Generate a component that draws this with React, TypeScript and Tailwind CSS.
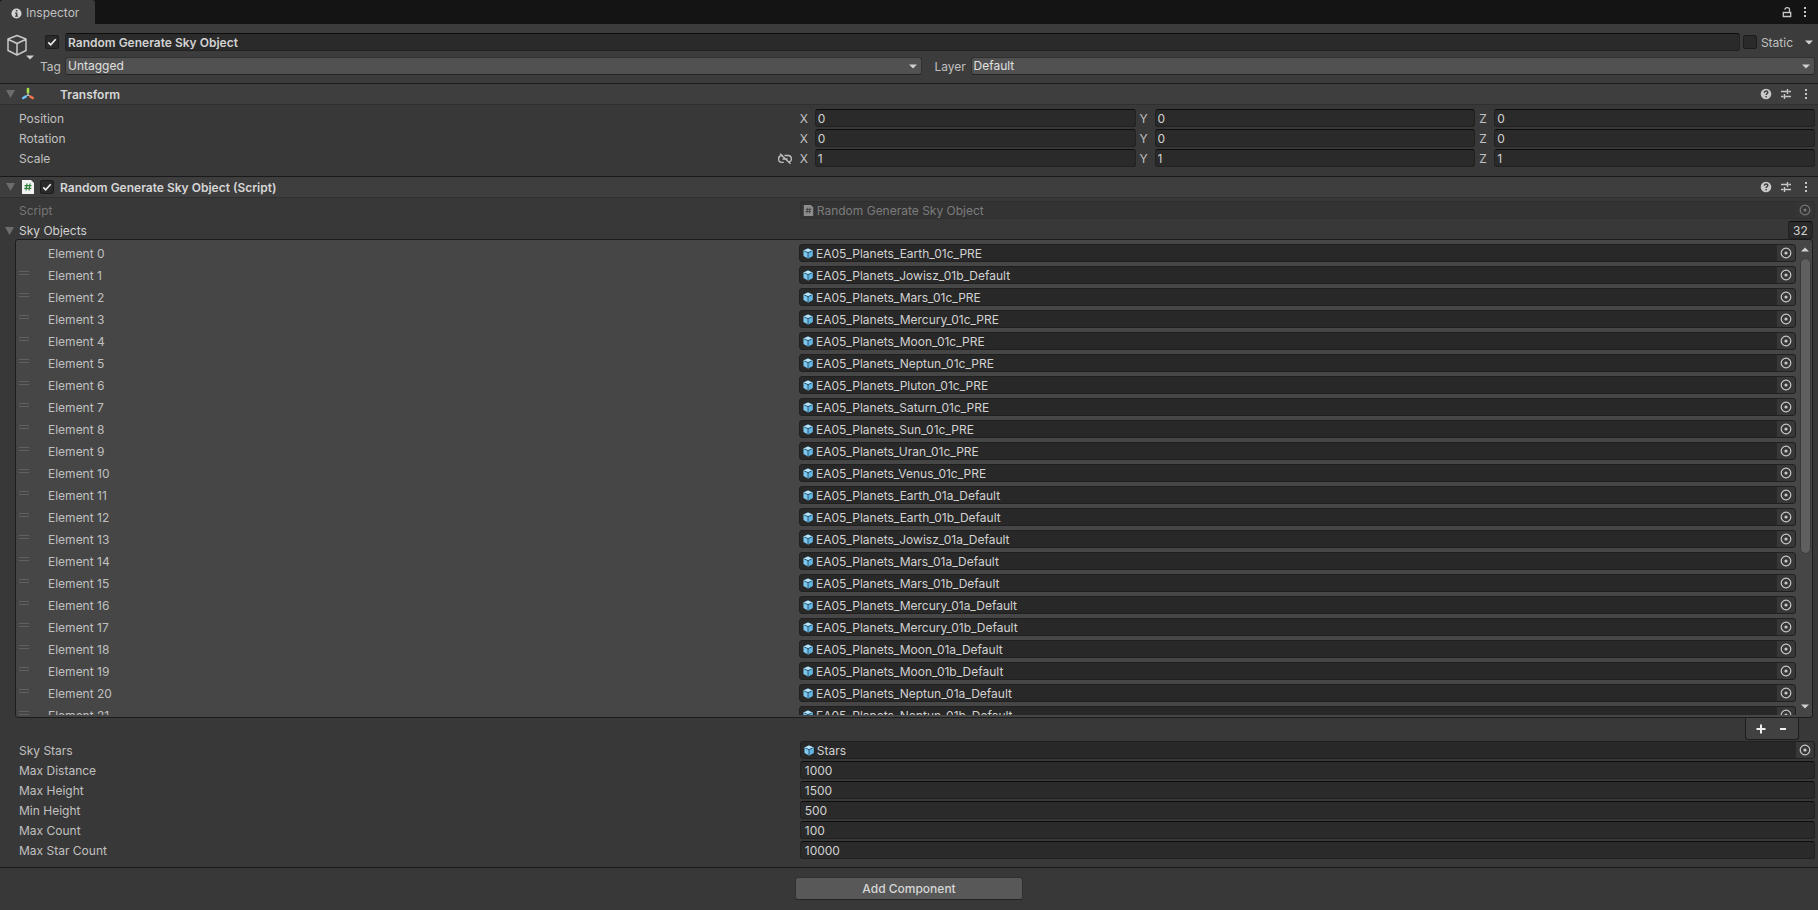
import { useState } from "react";
import type { ReactNode } from "react";

const FIELD =
  "h-[18px] min-w-0 rounded-[3px] border border-[#212121] border-t-[#0d0d0d] bg-[#2a2a2a] text-[#d2d2d2] outline-none";
const LABEL = "shrink-0 truncate pt-0.5 pl-[19px] w-[calc(45%-17px)]";

const skyObjects = [
  "EA05_Planets_Earth_01c_PRE",
  "EA05_Planets_Jowisz_01b_Default",
  "EA05_Planets_Mars_01c_PRE",
  "EA05_Planets_Mercury_01c_PRE",
  "EA05_Planets_Moon_01c_PRE",
  "EA05_Planets_Neptun_01c_PRE",
  "EA05_Planets_Pluton_01c_PRE",
  "EA05_Planets_Saturn_01c_PRE",
  "EA05_Planets_Sun_01c_PRE",
  "EA05_Planets_Uran_01c_PRE",
  "EA05_Planets_Venus_01c_PRE",
  "EA05_Planets_Earth_01a_Default",
  "EA05_Planets_Earth_01b_Default",
  "EA05_Planets_Jowisz_01a_Default",
  "EA05_Planets_Mars_01a_Default",
  "EA05_Planets_Mars_01b_Default",
  "EA05_Planets_Mercury_01a_Default",
  "EA05_Planets_Mercury_01b_Default",
  "EA05_Planets_Moon_01a_Default",
  "EA05_Planets_Moon_01b_Default",
  "EA05_Planets_Neptun_01a_Default",
  "EA05_Planets_Neptun_01b_Default",
];

const transformRows = [
  { label: "Position", value: "0" },
  { label: "Rotation", value: "0" },
  { label: "Scale", value: "1" },
];

const numberFields = [
  { label: "Max Distance", value: "1000" },
  { label: "Max Height", value: "1500" },
  { label: "Min Height", value: "500" },
  { label: "Max Count", value: "100" },
  { label: "Max Star Count", value: "10000" },
];

function CaretDown() {
  return (
    <svg width="8" height="5" viewBox="0 0 8 5" className="shrink-0" aria-hidden="true">
      <path d="M0 .5h8L4 4.500z" fill="#d0d0d0" />
    </svg>
  );
}

function Foldout() {
  return (
    <svg width="9" height="8" viewBox="0 0 9 8" aria-hidden="true">
      <path d="M0 0h9L4.500 8z" fill="#6c6c6c" />
    </svg>
  );
}

function KebabIcon() {
  return (
    <svg width="4" height="12" viewBox="0 0 4 12" fill="#c8c8c8" aria-hidden="true">
      <rect x="1" y="1" width="2" height="2" />
      <rect x="1" y="5" width="2" height="2" />
      <rect x="1" y="9" width="2" height="2" />
    </svg>
  );
}

function HelpIcon() {
  return (
    <svg width="12" height="12" viewBox="0 0 12 12" aria-hidden="true">
      <circle cx="6" cy="6" r="5.300" fill="#c8c8c8" />
      <path d="M4.300 4.800C4.300 2.400 7.900 2.500 7.800 4.600 7.800 5.700 6.100 5.700 6.100 7" fill="none" stroke="#3e3e3e" strokeWidth="1.400" />
      <rect x="5.400" y="8" width="1.400" height="1.400" fill="#3e3e3e" />
    </svg>
  );
}

function PresetIcon() {
  return (
    <svg width="12" height="12" viewBox="0 0 12 12" fill="none" stroke="#c8c8c8" strokeWidth="1.400" aria-hidden="true">
      <path d="M1 3.500h6M8.500 3.500H11M7.500 1v5M1 8.500h2.500M5 8.500h6M4.500 6v5" />
    </svg>
  );
}

function LockIcon() {
  return (
    <svg width="10" height="12" viewBox="0 0 10 12" fill="none" stroke="#c8c8c8" strokeWidth="1.300" aria-hidden="true">
      <path d="M1.300 6.500h7.400v4H1.300zM3 3.800V3.500C3 .9 7.500.9 7.500 3.500v3" />
    </svg>
  );
}

function InfoIcon() {
  return (
    <svg width="11" height="11" viewBox="0 0 11 11" aria-hidden="true">
      <circle cx="5.500" cy="5.500" r="5" fill="#d4d4d4" />
      <path d="M4.800 2h1.600v1.500H4.800zM4 4.600h2.400v3.200h.8v1H4v-1h.8V5.600H4z" fill="#3c3c3c" />
    </svg>
  );
}

function GameObjectIcon() {
  return (
    <svg width="22" height="22" viewBox="0 0 22 22" fill="none" stroke="#c8c8c8" strokeWidth="1.500" strokeLinejoin="round" aria-hidden="true">
      <path d="M11 1.500 20 5v11.500L11 21 2 16.500V5zM2 5.200l9 4.300 9-4.300M11 9.500V21" />
    </svg>
  );
}

function TransformIcon() {
  return (
    <svg width="14" height="14" viewBox="0 0 14 14" fill="none" strokeLinecap="round" aria-hidden="true">
      <path d="M7 6v2L5 9.300M7 8l2 1.300" stroke="#d8d8d8" strokeWidth="1" />
      <path d="M7 2v3.200" stroke="#a5e04b" strokeWidth="2.600" />
      <path d="M4.600 9.600 2.200 11" stroke="#6cc4f5" strokeWidth="2.600" />
      <path d="M9.400 9.600 11.800 11" stroke="#f0714a" strokeWidth="2.600" />
    </svg>
  );
}

function ScriptIcon({ muted = false }: { muted?: boolean }) {
  const size = muted ? 11 : 14;
  return (
    <svg width={size} height={size} viewBox="0 0 14 14" className="shrink-0" aria-hidden="true">
      <path d="M1 0h9l3 3v11H1z" fill={muted ? "#8c8c8c" : "#f2f2f2"} />
      <path d="M6 3.500 5 10.500M9 3.500 8 10.500M3.500 5.700h7M3.200 8.300h7" stroke={muted ? "#444444" : "#2f7d3b"} strokeWidth="1.200" />
    </svg>
  );
}

function PrefabIcon() {
  return (
    <svg width="10" height="11" viewBox="0 0 11 12" className="shrink-0" aria-hidden="true">
      <path d="M5.500.5 10.500 2.800v6L5.500 11.500.5 8.800v-6z" fill="#7fc9f0" />
      <path d="M5.500.5 10.500 2.800 5.500 5 .5 2.800z" fill="#b4e2f9" />
      <path d="M5.500 5 10.500 2.800v6L5.500 11.500z" fill="#62b6e4" />
      <path d="M1.500 3.300l4 1.800 4-1.800M5.500 5.100V11" fill="none" stroke="#1f4a63" strokeWidth="1" />
    </svg>
  );
}

function UnlinkIcon() {
  return (
    <svg width="14" height="12" viewBox="0 0 14 12" fill="none" stroke="#c0c0c0" strokeWidth="1.300" aria-hidden="true">
      <path d="M5 2.500H4a3.300 3.300 0 0 0 0 6.800h1.800M6.500 2.500H10a3.300 3.300 0 0 1 1.200 6.400M4.500 6h5M2 .8l10.500 10" />
    </svg>
  );
}

function Checkbox({ label, defaultChecked = false }: { label: string; defaultChecked?: boolean }) {
  return (
    <span className="grid size-[14px] shrink-0">
      <input
        type="checkbox"
        aria-label={label}
        defaultChecked={defaultChecked}
        className="peer col-start-1 row-start-1 size-[14px] appearance-none rounded-[2px] border border-[#1c1c1c] bg-[#2a2a2a]"
      />
      <svg
        viewBox="0 0 14 14"
        className="pointer-events-none invisible col-start-1 row-start-1 size-[14px] peer-checked:visible"
        fill="none"
        stroke="#eeeeee"
        strokeWidth="1.700"
        aria-hidden="true"
      >
        <path d="M3.300 7.300 5.700 9.800 10.700 4.200" />
      </svg>
    </span>
  );
}

function Dropdown({ id, value }: { id: string; value: string }) {
  return (
    <span className="grid h-[18px] min-w-0 flex-1 items-center">
      <select
        id={id}
        className="col-start-1 row-start-1 h-[18px] w-full appearance-none rounded-[3px] border border-[#303030] border-b-[#242424] bg-[#515151] pl-0.5 leading-4 text-[#e0e0e0] outline-none"
      >
        <option>{value}</option>
      </select>
      <span className="pointer-events-none col-start-1 row-start-1 mr-[5px] justify-self-end">
        <CaretDown />
      </span>
    </span>
  );
}

function ObjectField({ value, icon, muted = false }: { value: string; icon: ReactNode; muted?: boolean }) {
  return (
    <div
      className={`flex h-[18px] min-w-0 flex-1 items-center overflow-hidden rounded-[3px] border ${
        muted ? "border-[#2f2f2f] bg-[#333333] text-[#7c7c7c]" : "border-[#202020] bg-[#292828] text-[#d2d2d2]"
      }`}
    >
      <span className="flex w-[16px] shrink-0 justify-center">{icon}</span>
      <span className="min-w-0 flex-1 truncate pt-0.5">{value}</span>
      <button
        type="button"
        aria-label={`Select ${value}`}
        className={`flex h-full w-[18px] items-center justify-center ${muted ? "bg-[#353535] text-[#757575]" : "bg-[#373737] text-[#c8c8c8]"}`}
      >
        <svg width="12" height="12" viewBox="0 0 12 12" aria-hidden="true">
          <circle cx="6" cy="6" r="4.800" fill="none" stroke="currentColor" strokeWidth="1.200" />
          <circle cx="6" cy="6" r="1.600" fill="currentColor" />
        </svg>
      </button>
    </div>
  );
}

function ComponentHeader({ icon, title, toggle }: { icon: ReactNode; title: string; toggle?: boolean }) {
  return (
    <div className="flex h-[22px] items-center border-y border-t-[#1a1a1a] border-b-[#303030] bg-[#3e3e3e] pr-1.5 pl-1.5">
      <button type="button" aria-label={`Toggle ${title}`} className="w-[15px]">
        <Foldout />
      </button>
      <span className="w-[19px]">{icon}</span>
      <span className="flex w-5">{toggle && <Checkbox label={title} defaultChecked />}</span>
      <h2 className="flex-1 truncate pt-0.5 font-semibold text-[#d6d6d6]">{title}</h2>
      <div className="flex items-center gap-2">
        <button type="button" aria-label="Help">
          <HelpIcon />
        </button>
        <button type="button" aria-label="Presets">
          <PresetIcon />
        </button>
        <button type="button" aria-label="More options" className="flex w-3 justify-center">
          <KebabIcon />
        </button>
      </div>
    </div>
  );
}

function TransformSection() {
  return (
    <section>
      <ComponentHeader icon={<TransformIcon />} title="Transform" />
      <div className="flex flex-col gap-0.5 pt-1 pr-[3px] pb-[9px]">
        {transformRows.map(({ label, value }) => (
          <div key={label} className="flex items-center">
            <div className={`${LABEL} flex items-center justify-between`}>
              {label}
              {label === "Scale" && (
                <button type="button" aria-label="Constrain proportions" className="mr-2">
                  <UnlinkIcon />
                </button>
              )}
            </div>
            <div className="grid flex-1 grid-cols-3 gap-1">
              {["X", "Y", "Z"].map((axis) => (
                <label key={axis} className="flex min-w-0 items-center">
                  <span className="w-[15px] shrink-0 pt-0.5">{axis}</span>
                  <input aria-label={`${label} ${axis}`} defaultValue={value} className={`${FIELD} w-full px-0.5`} />
                </label>
              ))}
            </div>
          </div>
        ))}
      </div>
    </section>
  );
}

function SkyObjectList() {
  return (
    <>
      <div className="mr-[5px] ml-[15px] flex h-[479px] rounded-[3px] border border-[#1c1c1c] bg-[#464646] pb-0.5">
        {/* Rows run under the scrollbar column so labels line up with the fields outside the list. */}
        <ul className="-mr-[14px] min-w-0 flex-1 overflow-hidden pt-1">
          {skyObjects.map((name, i) => (
            <li key={name} className="mb-1 flex items-center pr-4">
              <div className="flex w-[calc(45%-18px)] shrink-0 items-center">
                <span className={`mx-[3px] mb-1 h-1 w-2.5 ${i === 0 ? "" : "border-y border-[#606060]"}`} />
                <span className="pt-0.5 pl-4">Element {i}</span>
              </div>
              <ObjectField value={name} icon={<PrefabIcon />} />
            </li>
          ))}
        </ul>
        <div className="flex w-[14px] flex-col items-center pt-[7px] pb-1.5" aria-hidden="true">
          <span className="rotate-180">
            <CaretDown />
          </span>
          <span className="mt-1.5 h-[296px] w-[11px] rounded-md border border-[#383838] bg-[#5f5f5f]" />
          <span className="mt-auto">
            <CaretDown />
          </span>
        </div>
      </div>
      <div className="mr-[19px] flex justify-end">
        <div className="flex h-[22px] w-[54px] items-center justify-around rounded-b-[3px] border border-t-0 border-[#1c1c1c] bg-[#414141] px-1">
          <button type="button" aria-label="Add element">
            <svg width="10" height="10" viewBox="0 0 10 10" aria-hidden="true">
              <path d="M5 .5v9M.5 5h9" stroke="#f0f0f0" strokeWidth="2" />
            </svg>
          </button>
          <button type="button" aria-label="Remove element">
            <svg width="10" height="10" viewBox="0 0 10 10" aria-hidden="true">
              <path d="M2 5h6" stroke="#f0f0f0" strokeWidth="2" />
            </svg>
          </button>
        </div>
      </div>
    </>
  );
}

function ScriptSection() {
  return (
    <section>
      <ComponentHeader icon={<ScriptIcon />} title="Random Generate Sky Object (Script)" toggle />
      <div className="flex items-center pt-[3px] pr-[3px]">
        <span className={`${LABEL} text-[#757575]`}>Script</span>
        <ObjectField value="Random Generate Sky Object" icon={<ScriptIcon muted />} muted />
      </div>
      <div className="mt-0.5 flex h-[18px] items-center justify-between px-[5px]">
        <button type="button" className="flex items-center gap-[5px] pt-0.5 text-[#d2d2d2]">
          <Foldout />
          Sky Objects
        </button>
        <input aria-label="Sky Objects size" defaultValue="32" className={`${FIELD} w-[25px] px-1`} />
      </div>
      <SkyObjectList />
      <div className="flex flex-col gap-0.5 pt-px pr-[3px] pb-2">
        <div className="flex items-center">
          <span className={LABEL}>Sky Stars</span>
          <ObjectField value="Stars" icon={<PrefabIcon />} />
        </div>
        {numberFields.map(({ label, value }) => (
          <label key={label} className="flex items-center">
            <span className={LABEL}>{label}</span>
            <input defaultValue={value} className={`${FIELD} flex-1 px-1`} />
          </label>
        ))}
      </div>
    </section>
  );
}

export default function App() {
  const [name, setName] = useState("Random Generate Sky Object");

  return (
    <div className="min-h-screen bg-[#383838] font-['Inter',sans-serif] text-[12px] leading-4 text-[#c0c0c0]">
      <div className="flex h-6 items-center justify-between bg-[#141414] pr-[11px]">
        <button type="button" className="flex h-6 w-[95px] items-center gap-1 rounded-t-[3px] bg-[#3c3c3c] pt-0.5 pl-[11px]">
          <InfoIcon />
          Inspector
        </button>
        <div className="flex items-center gap-[11px]">
          <button type="button" aria-label="Lock">
            <LockIcon />
          </button>
          <button type="button" aria-label="Tab options">
            <KebabIcon />
          </button>
        </div>
      </div>

      <header className="flex h-[59px] bg-[#3c3c3c] pt-[9px] pr-[3px]">
        <button type="button" aria-label="Object icon" className="flex h-[27px] w-[34px] shrink-0 items-end pl-1.5">
          <span className="-mr-0.5 mb-1">
            <GameObjectIcon />
          </span>
          <CaretDown />
        </button>
        <div className="flex min-w-0 flex-1 flex-col gap-1.5">
          <div className="flex items-center">
            <span className="flex w-[31px] pl-[11px]">
              <Checkbox label="Active" defaultChecked />
            </span>
            <input
              aria-label="Name"
              value={name}
              onChange={(e) => setName(e.target.value)}
              className={`${FIELD} flex-1 px-0.5 font-semibold`}
            />
            <label className="flex items-center gap-1 pl-[3px]">
              <Checkbox label="Static" />
              <span className="pt-0.5">Static</span>
            </label>
            <button type="button" aria-label="Static flags" className="pr-0.5 pl-3">
              <CaretDown />
            </button>
          </div>
          <div className="grid grid-cols-2">
            <div className="flex items-center pr-[3px]">
              <label htmlFor="tag" className="w-[31px] pt-0.5 pl-1.5">
                Tag
              </label>
              <Dropdown id="tag" value="Untagged" />
            </div>
            <div className="flex items-center pl-2.5">
              <label htmlFor="layer" className="w-[36px] pt-0.5">
                Layer
              </label>
              <Dropdown id="layer" value="Default" />
            </div>
          </div>
        </div>
      </header>

      <TransformSection />
      <ScriptSection />

      <footer className="flex justify-center border-t border-[#1a1a1a] pt-[9px] pb-2.5">
        <button
          type="button"
          className="h-[23px] w-[228px] rounded-[3px] border border-[#303030] border-b-[#242424] bg-[#585858] font-medium text-[#d6d6d6]"
        >
          Add Component
        </button>
      </footer>
    </div>
  );
}
